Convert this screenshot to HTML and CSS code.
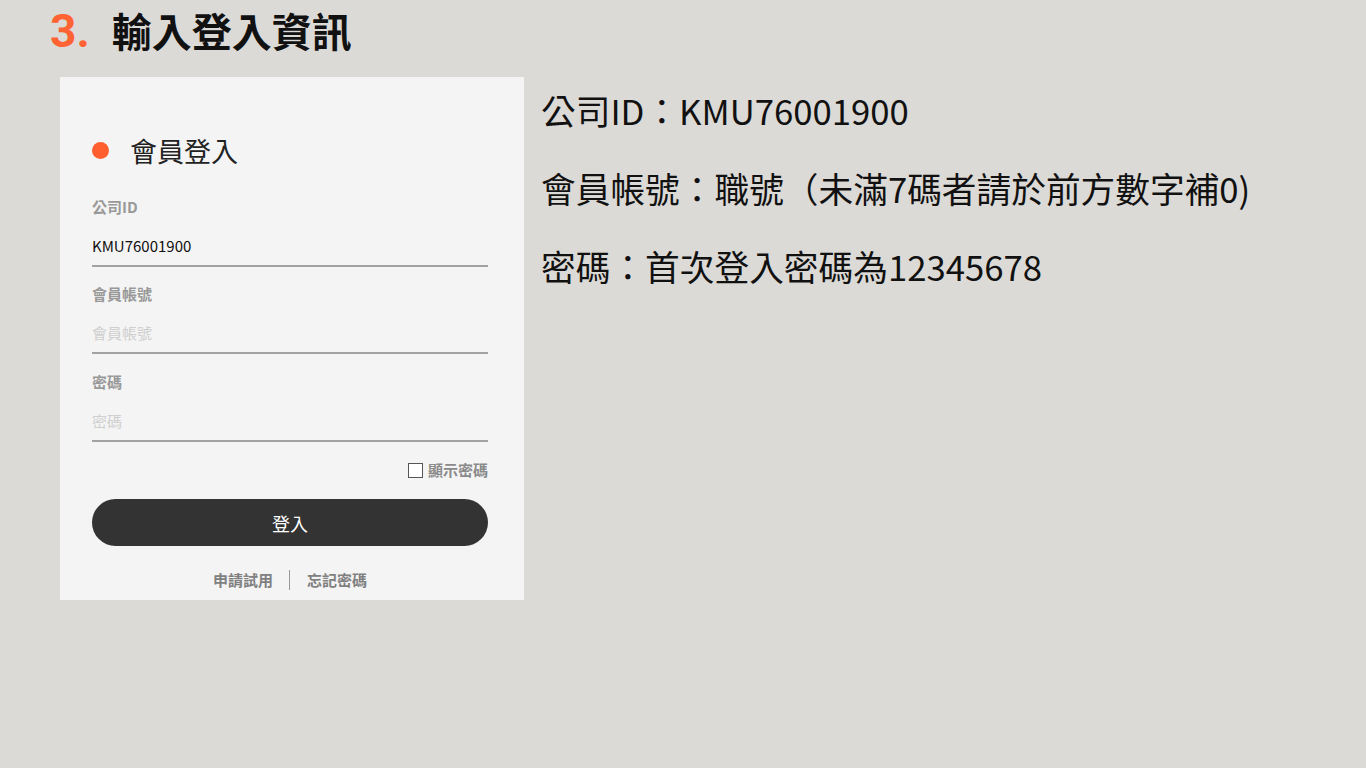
FILE: index.html
```html
<!DOCTYPE html>
<html lang="zh-Hant">
<head>
    <meta charset="UTF-8">
    <meta name="viewport" content="width=device-width, initial-scale=1.0">
    <title>輸入登入資訊</title>
    <link rel="stylesheet" href="styles.css">
</head>
<body>
    <h1 class="title"><span class="step">3.</span><span>輸入登入資訊</span></h1>

    <div class="row">
        <div class="card">
            <div class="card-head">
                <span class="dot"></span>
                <span>會員登入</span>
            </div>

            <div class="field">
                <div class="label">公司ID</div>
                <div class="input">KMU76001900</div>
            </div>
            <div class="field">
                <div class="label">會員帳號</div>
                <div class="input empty">會員帳號</div>
            </div>
            <div class="field last">
                <div class="label">密碼</div>
                <div class="input empty">密碼</div>
            </div>

            <div class="show-pw">
                <span class="box"></span>
                <span>顯示密碼</span>
            </div>

            <button class="login">登入</button>

            <div class="links">
                <span>申請試用</span>
                <span class="sep"></span>
                <span>忘記密碼</span>
            </div>
        </div>

        <div class="info">
            <p>公司ID：KMU76001900</p>
            <p>會員帳號：職號（未滿7碼者請於前方數字補0)</p>
            <p>密碼：首次登入密碼為12345678</p>
        </div>
    </div>
</body>
</html>
```

FILE: styles.css
```css
body {
    margin: 0;
    padding: 0 0 0 50px;
    background: #dcdad6;
    font-family: "Noto Sans CJK TC", "Noto Sans", sans-serif;
    color: #111;
}
.title {
    display: flex;
    align-items: baseline;
    height: 54px;
    margin: 0;
    padding-top: 2px;
    font-size: 40px;
    line-height: 56px;
    font-weight: bold;
    color: #111;
}
.step {
    color: #ff6233;
    font-family: Roboto, "Noto Sans", sans-serif;
    font-size: 46px;
    margin-right: 22px;
}
.row {
    display: flex;
    align-items: flex-start;
    gap: 17px;
    margin-top: 21px;
    margin-left: 10px;
}
.card {
    width: 396px;
    background: #f4f4f4;
    padding: 55px 36px 10px 32px;
}
.card-head {
    display: flex;
    align-items: center;
    height: 36px;
    font-size: 27px;
    color: #222;
    margin-bottom: 29px;
}
.dot {
    width: 17px;
    height: 17px;
    border-radius: 50%;
    background: #ff5e2e;
    margin-right: 21px;
}
.field + .field {
    margin-top: 17px;
}
.field.last {
    margin-top: 18px;
}
.label {
    font-size: 15px;
    line-height: 20px;
    font-weight: bold;
    color: #999;
    margin-bottom: 10px;
}
.input {
    font-size: 15px;
    line-height: 20px;
    padding: 9px 0;
    border-bottom: 2px solid #a2a2a2;
    color: #111;
}
.input.empty {
    color: #cfcfcf;
}
.show-pw {
    display: flex;
    justify-content: flex-end;
    align-items: center;
    margin: 18px 0 19px;
    font-size: 15px;
    line-height: 20px;
    font-weight: bold;
    color: #8a8a8a;
}
.box {
    width: 13px;
    height: 13px;
    border: 1px solid #555;
    background: #fff;
    margin-right: 5px;
}
.login {
    display: block;
    width: 100%;
    height: 47px;
    border: none;
    border-radius: 24px;
    background: #333;
    color: #fff;
    font-family: inherit;
    font-size: 18px;
}
.links {
    display: flex;
    justify-content: center;
    align-items: center;
    margin-top: 24px;
    font-size: 15px;
    line-height: 20px;
    font-weight: bold;
    color: #808080;
}
.sep {
    width: 1px;
    height: 20px;
    background: #999;
    margin: 0 17px 0 16px;
}
.info {
    padding-top: 11px;
}
.info p {
    margin: 0 0 34px;
    font-size: 34.7px;
    line-height: 44px;
    color: #111;
}
```
